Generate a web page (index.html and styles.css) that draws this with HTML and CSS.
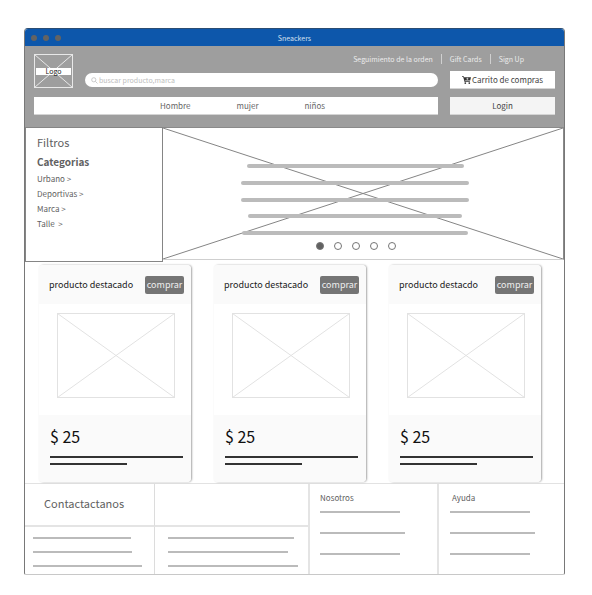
FILE: index.html
```html
<!DOCTYPE html>
<html lang="es">
<head>
<meta charset="utf-8">
<meta name="viewport" content="width=device-width, initial-scale=1">
<title>Sneackers</title>
<link rel="stylesheet" href="styles.css">
</head>
<body>
<div class="window">
  <div class="titlebar">
    <div class="lights"><i></i><i></i><i></i></div>
    <h1>Sneackers</h1>
  </div>

  <header class="header">
    <div class="header-top">
      <a class="logo" href="#">
        <svg viewBox="0 0 39 34" preserveAspectRatio="none" aria-hidden="true"><rect x=".5" y=".5" width="38" height="33"/><path d="M.5.5l38 33M38.5.5l-38 33"/></svg>
        <span>Logo</span>
      </a>
      <nav class="links">
        <a href="#">Seguimiento de la orden</a>
        <a href="#">Gift Cards</a>
        <a href="#">Sign Up</a>
      </nav>
      <label class="search">
        <svg viewBox="0 0 8 8" aria-hidden="true"><circle cx="3.2" cy="3.2" r="2.4"/><path d="M5 5l2.4 2.4"/></svg>
        <input type="search" placeholder="buscar producto,marca">
      </label>
      <button class="btn cart" type="button">
        <svg viewBox="0 0 9 8" aria-hidden="true"><path d="M0 .3h1.7l.4 1H9L8.2 4.6H3.1l.2.7h4.6v.8H2.6L1.2 1.1H0z"/><circle cx="3.3" cy="7.1" r=".9"/><circle cx="7.3" cy="7.1" r=".9"/><path class="plus" d="M5.4 1.8v2M4.4 2.8h2"/></svg>
        Carrito de compras
      </button>
    </div>
    <div class="header-bottom">
      <nav class="menu">
        <a href="#">Hombre</a>
        <a href="#">mujer</a>
        <a href="#">niños</a>
      </nav>
      <button class="btn login" type="button">Login</button>
    </div>
  </header>

  <section class="intro">
    <aside class="filters">
      <h2>Filtros</h2>
      <h3>Categorias</h3>
      <ul>
        <li><a href="#">Urbano &gt;</a></li>
        <li><a href="#">Deportivas &gt;</a></li>
        <li><a href="#">Marca &gt;</a></li>
        <li><a href="#">Talle&nbsp; &gt;</a></li>
      </ul>
    </aside>
    <div class="hero">
      <svg class="cross" viewBox="0 0 100 100" preserveAspectRatio="none" aria-hidden="true"><path d="M0 0L100 100M100 0L0 100"/></svg>
      <div class="hero-content">
        <div class="hero-lines"><i class="w217"></i><i class="w228"></i><i class="w228"></i><i class="w214"></i><i class="w226"></i></div>
        <div class="dots">
          <button class="active" type="button" aria-label="1"></button>
          <button type="button" aria-label="2"></button>
          <button type="button" aria-label="3"></button>
          <button type="button" aria-label="4"></button>
          <button type="button" aria-label="5"></button>
        </div>
      </div>
    </div>
  </section>

  <main class="cards">
    <article class="card">
      <div class="card-head"><h2>producto destacado</h2><button type="button">comprar</button></div>
      <div class="card-image"><svg viewBox="0 0 118 85" preserveAspectRatio="none" aria-hidden="true"><rect x=".5" y=".5" width="117" height="84"/><path d="M.5.5l117 84M117.5.5l-117 84"/></svg></div>
      <div class="card-foot"><p>$ 25</p><i class="long"></i><i class="short"></i></div>
    </article>
    <article class="card">
      <div class="card-head"><h2>producto destacado</h2><button type="button">comprar</button></div>
      <div class="card-image"><svg viewBox="0 0 118 85" preserveAspectRatio="none" aria-hidden="true"><rect x=".5" y=".5" width="117" height="84"/><path d="M.5.5l117 84M117.5.5l-117 84"/></svg></div>
      <div class="card-foot"><p>$ 25</p><i class="long"></i><i class="short"></i></div>
    </article>
    <article class="card">
      <div class="card-head"><h2>producto destacdo</h2><button type="button">comprar</button></div>
      <div class="card-image"><svg viewBox="0 0 118 85" preserveAspectRatio="none" aria-hidden="true"><rect x=".5" y=".5" width="117" height="84"/><path d="M.5.5l117 84M117.5.5l-117 84"/></svg></div>
      <div class="card-foot"><p>$ 25</p><i class="long"></i><i class="short"></i></div>
    </article>
  </main>

  <footer class="footer">
    <section class="contact">
      <div class="cell title"><h2>Contactactanos</h2></div>
      <div class="cell title"></div>
      <div class="cell lines"><i class="w98"></i><i class="w99"></i><i class="w109"></i></div>
      <div class="cell lines second"><i class="w126"></i><i class="w120"></i><i class="w130"></i></div>
    </section>
    <section class="column about">
      <h3>Nosotros</h3>
      <i class="w80"></i><i class="w85"></i><i class="w80"></i>
    </section>
    <section class="column help">
      <h3>Ayuda</h3>
      <i class="w80"></i><i class="w85"></i><i class="w80"></i>
    </section>
  </footer>
</div>
</body>
</html>
```

FILE: styles.css
```css
* { box-sizing: border-box; margin: 0; padding: 0; }

body {
  background: #fff;
  color: #616161;
  font: 8px/15px "Noto Sans CJK SC", "Noto Sans", sans-serif;
}

a { color: inherit; text-decoration: none; }
ul { list-style: none; }
button { border: 0; font: inherit; color: inherit; }
svg { display: block; fill: none; }
i { display: block; }
h1, h2, h3 { font-weight: 400; }

.window {
  margin: 28px 27px 20px 24px;
  border: 1px solid #787878;
  border-top-color: #2b4d73;
  border-bottom-color: #c8c8c8;
  border-radius: 4px 4px 2px 2px;
  overflow: hidden;
}

/* Title bar */
.titlebar {
  display: grid;
  grid-template-columns: 1fr auto 1fr;
  align-items: center;
  height: 17px;
  padding: 0 6px;
  background: #0d57ab;
}
.lights { display: flex; gap: 6px; }
.lights i { width: 6px; height: 6px; border-radius: 50%; background: #636363; }
.titlebar h1 { font-size: 7px; line-height: 16px; color: #d3e0ef; }

/* Header */
.header {
  padding: 8px 9px 12px;
  background: #9e9e9e;
}
.header-top {
  display: grid;
  grid-template-columns: 39px 1fr 105px;
  grid-template-rows: 13px 18px;
  gap: 4px 12px;
  margin-bottom: 8px;
}
.header-bottom {
  display: grid;
  grid-template-columns: 1fr 105px;
  gap: 12px;
}
.logo {
  grid-row: 1 / 3;
  display: grid;
  align-items: center;
  height: 34px;
}
.logo > * { grid-area: 1 / 1; }
.logo svg { width: 100%; height: 34px; stroke: #e8e8e8; }
.logo span {
  margin: 0 2px;
  background: #fff;
  color: #222;
  font-size: 7px;
  line-height: 7px;
  text-align: center;
}
.links {
  grid-column: 2 / 4;
  display: flex;
  align-items: flex-start;
  justify-content: flex-end;
  padding-right: 31px;
  font-size: 7px;
  line-height: 10px;
  color: #ececec;
}
.links a + a {
  margin-left: 8px;
  padding-left: 8px;
  border-left: 1px solid #d0d0d0;
}
.search {
  align-self: center;
  display: flex;
  align-items: center;
  gap: 1px;
  height: 14px;
  padding: 0 6px;
  border-radius: 7px;
  background: #fff;
}
.search svg { width: 7px; height: 7px; stroke: #c4c4c4; stroke-width: 1; }
.search input {
  flex: 1;
  min-width: 0;
  border: 0;
  outline: 0;
  background: none;
  font: 7px/14px "Noto Sans CJK SC", "Noto Sans", sans-serif;
}
.search input::placeholder { color: #bdbdbd; opacity: 1; }
.btn {
  display: flex;
  align-items: center;
  justify-content: center;
  gap: 1px;
  height: 18px;
  background: #fff;
  color: #444;
  border-bottom: 1px solid #d4d4d4;
}
.btn.login { background: #f4f4f4; }
.cart svg { width: 9px; height: 8px; fill: #333; }
.cart .plus { stroke: #fff; stroke-width: .6; }
.menu {
  display: flex;
  align-items: center;
  gap: 46px;
  height: 18px;
  padding-left: 126px;
  background: #fff;
  border-bottom: 1px solid #d4d4d4;
  color: #666;
}

/* Filters and banner */
.intro {
  display: grid;
  grid-template-columns: 138px 1fr;
}
.filters {
  height: 135px;
  padding: 7px 11px;
  border: 1px solid #858585;
}
.filters h2 { margin-bottom: 4px; font-size: 11px; }
.filters h3 { margin-bottom: 2px; font-size: 10px; font-weight: 700; }
.hero {
  display: grid;
  height: 133px;
  border: solid #8a8a8a;
  border-width: 1px 1px 1px 0;
  border-bottom-color: #cfcfcf;
}
.hero > * { grid-area: 1 / 1; }
.cross { width: 100%; height: 131px; }
.cross path { stroke: #858585; stroke-width: 1; vector-effect: non-scaling-stroke; }
.hero-content {
  display: flex;
  flex-direction: column;
  align-items: center;
  gap: 7px;
  padding: 36px 16px 0 0;
}
.hero-lines {
  display: flex;
  flex-direction: column;
  align-items: center;
  justify-content: space-between;
  height: 71px;
}
.hero-lines i { height: 4px; border-radius: 2px; background: #bbb; }
.w217 { width: 217px; }
.w228 { width: 228px; }
.w214 { width: 214px; }
.w226 { width: 226px; }
.dots { display: flex; gap: 10px; padding-left: 2px; }
.dots button {
  width: 8px;
  height: 8px;
  border: 1px solid #757575;
  border-radius: 50%;
  background: #fff;
}
.dots .active { background: #616161; }

/* Product cards */
.cards {
  display: flex;
  justify-content: space-between;
  padding: 3px 23px 1px 14px;
}
.card {
  flex: 0 1 152px;
  border-radius: 4px;
  box-shadow: 1px 0 2px rgba(0, 0, 0, .35);
  overflow: hidden;
}
.card-head {
  display: flex;
  align-items: center;
  justify-content: space-between;
  height: 39px;
  padding: 0 7px 0 10px;
  background: #fafafa;
}
.card-head h2 { font-size: 9px; color: #212121; }
.card-head button {
  width: 39px;
  height: 18px;
  border-radius: 2px;
  background: #757575;
  color: #eee;
  font-size: 9px;
  line-height: 18px;
  text-align: center;
}
.card-image { padding: 9px 16px 17px 18px; }
.card-image svg { width: 100%; height: 85px; stroke: #e2e2e2; }
.card-foot {
  height: 67px;
  padding: 11px 8px 0 11px;
  background: #fafafa;
}
.card-foot p { margin-bottom: 10px; font-size: 16px; line-height: 20px; color: #111; }
.card-foot i { height: 2px; margin-bottom: 5px; background: #333; }
.card-foot .short { width: 77px; }

/* Footer */
.footer {
  display: grid;
  grid-template-columns: 285px 129px 1fr;
  border-top: 1px solid #e2e2e2;
}
.footer i { height: 2px; background: #bbb; }
.contact {
  display: grid;
  grid-template-columns: 130px 1fr;
  grid-template-rows: 43px 47px;
  border-right: 2px solid #e4e4e4;
}
.cell:nth-child(odd) { border-right: 1px solid #dcdcdc; }
.title { border-bottom: 2px solid #e4e4e4; }
.title h2 { padding: 11px 0 0 19px; font-size: 11px; line-height: 16px; }
.lines {
  display: grid;
  align-content: start;
  gap: 12px;
  padding: 10px 0 0 8px;
}
.second { padding-left: 13px; }
.w98 { width: 98px; }
.w99 { width: 99px; }
.w109 { width: 109px; }
.w126 { width: 126px; }
.w120 { width: 120px; }
.w130 { width: 130px; }
.w80 { width: 80px; }
.w85 { width: 85px; }
.column { padding: 6px 0 0 10px; }
.about { border-right: 2px solid #e4e4e4; }
.column h3 { margin-bottom: 6px; font-size: 8px; }
.help { padding-left: 11px; }
.help h3 { padding-left: 2px; }
.column i { margin-bottom: 19px; }
.column i:last-child { margin-bottom: 0; }
```
